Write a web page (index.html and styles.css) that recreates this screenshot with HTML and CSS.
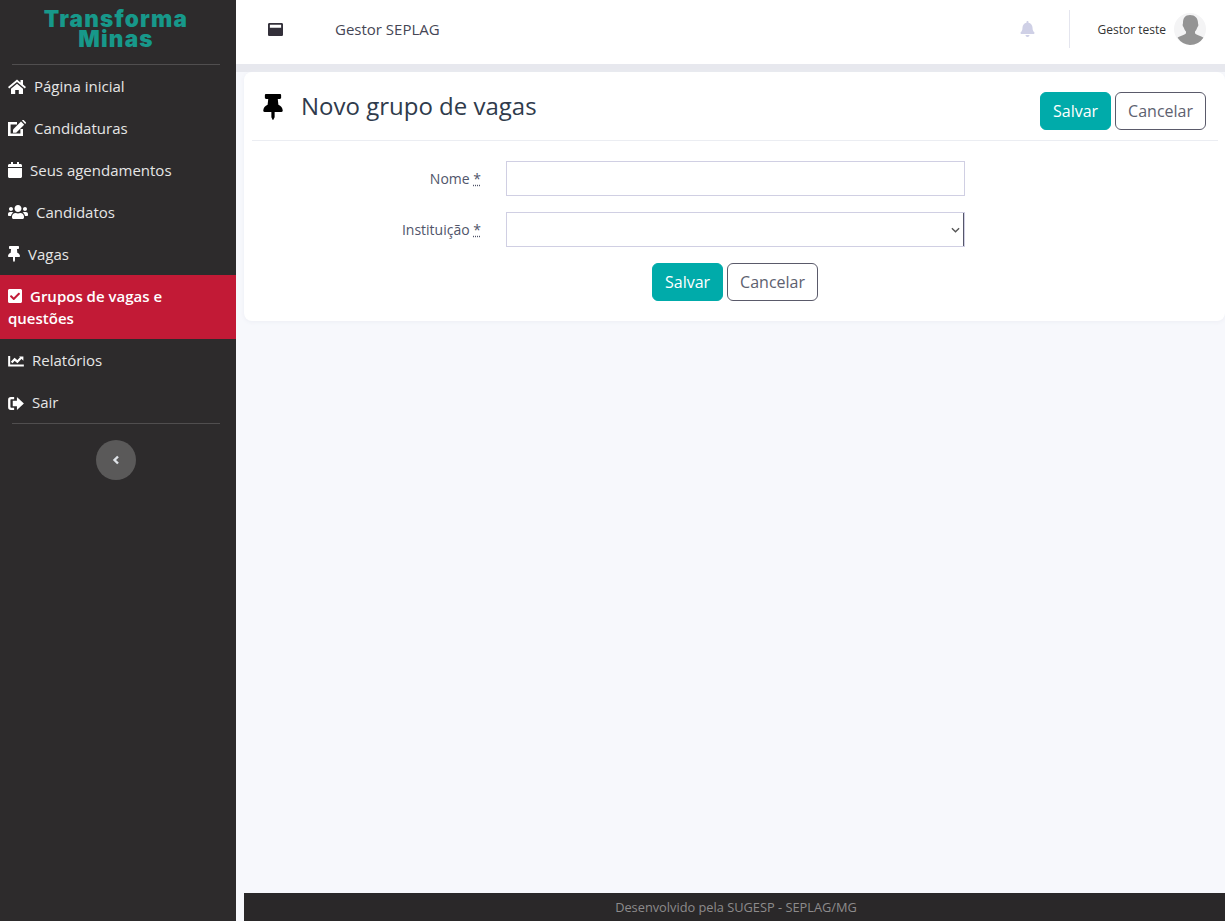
FILE: index.html
```html
<!DOCTYPE html>
<html lang="pt-BR">
<head>
<meta charset="utf-8">
<title>Novo grupo de vagas</title>
<link rel="stylesheet" href="styles.css">
</head>
<body>
<aside class="sidebar">
  <div class="logo">Transforma<br>Minas</div>
  <nav class="menu">
    <a class="item"><svg class="ic ic-home" viewBox="0 0 18 15"><path d="M9 .5 0 8l1.200 1.400L9 3l7.800 6.400L18 8l-3-2.500V1h-2.500v2.400z"/><path d="M3 9.800V15h4.200v-4h3.600v4H15V9.800L9 4.800z"/></svg><span class="t-home">Página inicial</span></a>
    <a class="item"><svg class="ic ic-edit" viewBox="0 0 18 16"><path d="M9 3.300H1.300v11.400h12.400V9" fill="none" stroke="#fff" stroke-width="2.600"/><path d="M5 9.500 13 1.500l3.200 3.200-8 8H5z"/><path d="M14 .6l.6-.5a.8.8 0 0 1 1 0L17.800 2.300a.8.8 0 0 1 0 1l-.6.6z"/></svg><span class="t-edit">Candidaturas</span></a>
    <a class="item"><svg class="ic ic-cal" viewBox="0 0 448 512"><path d="M12 192h424c6.600 0 12 5.400 12 12v260c0 26.500-21.500 48-48 48H48c-26.500 0-48-21.500-48-48V204c0-6.600 5.400-12 12-12zm436-44v-36c0-26.500-21.500-48-48-48h-48V12c0-6.600-5.400-12-12-12h-40c-6.600 0-12 5.400-12 12v52H160V12c0-6.600-5.400-12-12-12h-40c-6.600 0-12 5.400-12 12v52H48C21.500 64 0 85.500 0 112v36c0 6.600 5.400 12 12 12h424c6.600 0 12-5.400 12-12z"/></svg><span class="t-cal">Seus agendamentos</span></a>
    <a class="item"><svg class="ic ic-users" viewBox="0 0 640 512"><path d="M96 224c35.300 0 64-28.700 64-64s-28.700-64-64-64-64 28.700-64 64 28.700 64 64 64zm448 0c35.300 0 64-28.700 64-64s-28.700-64-64-64-64 28.700-64 64 28.700 64 64 64zm32 32h-64c-17.600 0-33.500 7.100-45.100 18.600 40.300 22.100 68.900 62 75.100 109.400h66c17.700 0 32-14.300 32-32v-32c0-35.300-28.700-64-64-64zm-256 0c61.900 0 112-50.100 112-112S381.900 32 320 32 208 82.100 208 144s50.100 112 112 112zm76.800 32h-8.300c-20.800 10-43.900 16-68.500 16s-47.600-6-68.500-16h-8.300C179.600 288 128 339.600 128 403.200V432c0 26.500 21.500 48 48 48h288c26.500 0 48-21.500 48-48v-28.800c0-63.600-51.600-115.200-115.200-115.200zm-223.700-13.400C161.500 263.100 145.600 256 128 256H64c-35.300 0-64 28.700-64 64v32c0 17.700 14.300 32 32 32h65.900c6.300-47.400 34.900-87.300 75.200-109.400z"/></svg><span class="t-users">Candidatos</span></a>
    <a class="item"><svg class="ic ic-pin" viewBox="0 0 384 512"><path d="M298 214 286 96h42c13 0 24-11 24-24V24c0-13-11-24-24-24H56C43 0 32 11 32 24v48c0 13 11 24 24 24h42L86 214C37 237 0 277 0 328c0 13 11 24 24 24h136v104l24 52c3 6 11 6 14 0l26-52V352h136c13 0 24-11 24-24 0-51-38-91-86-114z"/></svg><span class="t-pin">Vagas</span></a>
    <a class="item active"><svg class="ic ic-check" viewBox="0 0 448 512"><path d="M400 480H48c-26.510 0-48-21.490-48-48V80c0-26.510 21.490-48 48-48h352c26.510 0 48 21.490 48 48v352c0 26.510-21.490 48-48 48zm-204.686-98.059 184-184c6.248-6.248 6.248-16.379 0-22.627l-22.627-22.627c-6.248-6.248-16.379-6.249-22.628 0L184 302.745l-70.059-70.059c-6.248-6.248-16.379-6.248-22.628 0L68.686 255.314c-6.248 6.248-6.248 16.379 0 22.627l104 104c6.249 6.250 16.379 6.250 22.628.001z"/></svg><span class="t-check">Grupos de vagas e questões</span></a>
    <a class="item"><svg class="ic ic-chart" viewBox="0 0 17 13"><path d="M1.100 1v10.400H17" fill="none" stroke="#fff" stroke-width="2.200"/><path d="M3.800 8.200 7 4.700l3 2.500 4.200-4.400" fill="none" stroke="#fff" stroke-width="2.400"/><path d="M11.800 1.500H16.500V6.200z"/></svg><span class="t-chart">Relatórios</span></a>
    <a class="item"><svg class="ic ic-out" viewBox="0 0 17 14"><path d="M6.500 0v2.500H3.300a.8.8 0 0 0-.8.8v7.400a.8.8 0 0 0 .8.8h3.200V14H3a3 3 0 0 1-3-3V3a3 3 0 0 1 3-3z"/><path d="M9.500 0 17 7l-7.500 7v-4H5V4h4.500z"/></svg><span class="t-out">Sair</span></a>
  </nav>
  <button class="collapse" type="button" aria-label="Recolher"><svg viewBox="0 0 8 10"><path d="M6 1.500 2.500 5 6 8.500"/></svg></button>
</aside>

<div class="main">
  <header class="topbar">
    <svg class="toggle" viewBox="0 0 512 512"><path d="M464 32H48C21.500 32 0 53.500 0 80v352c0 26.500 21.500 48 48 48h416c26.500 0 48-21.500 48-48V80c0-26.500-21.500-48-48-48zm-16 160H64v-84c0-6.600 5.400-12 12-12h360c6.600 0 12 5.400 12 12v84z"/></svg>
    <span class="org">Gestor SEPLAG</span>
    <svg class="bell" viewBox="0 0 448 512"><path d="M224 512c35.320 0 63.970-28.650 63.970-64H160.030c0 35.350 28.650 64 63.970 64zm215.390-149.710c-19.320-20.760-55.470-51.990-55.470-154.290 0-77.700-54.480-139.900-127.940-155.160V32c0-17.670-14.320-32-31.980-32s-31.980 14.330-31.980 32v20.840C118.560 68.100 64.080 130.300 64.080 208c0 102.300-36.150 133.530-55.470 154.290-6 6.450-8.660 14.160-8.610 21.710.11 16.400 12.980 32 32.100 32h383.800c19.120 0 32-15.600 32.100-32 .05-7.550-2.610-15.270-8.610-21.710z"/></svg>
    <span class="divider"></span>
    <span class="user">Gestor teste</span>
    <svg class="avatar" viewBox="0 0 32 32"><circle cx="16" cy="16" r="16" fill="#f4f4f5"/><path fill="#949494" d="M16 2c5 0 8 3.200 8 7.800 0 1.300.5 1.500.3 2.800-.2 1-.7 1.300-1 2-.5 1.500-1.300 3-2.300 4v1.600c1.500 1.800 6 2.500 8.400 4.600A16 16 0 0 1 16 32a16 16 0 0 1-12.400-7.200c2.400-2.100 6.900-2.800 8.400-4.600v-1.600c-1-1-1.800-2.500-2.300-4-.3-.7-.8-1-1-2-.2-1.300.3-1.500.3-2.800C9 5.200 11 2 16 2z"/></svg>
  </header>

  <div class="content">
    <section class="card">
      <div class="card-head">
        <svg class="head-pin" viewBox="0 0 384 512"><path d="M298 214 286 96h42c13 0 24-11 24-24V24c0-13-11-24-24-24H56C43 0 32 11 32 24v48c0 13 11 24 24 24h42L86 214C37 237 0 277 0 328c0 13 11 24 24 24h136v104l24 52c3 6 11 6 14 0l26-52V352h136c13 0 24-11 24-24 0-51-38-91-86-114z"/></svg>
        <h1 class="title">Novo grupo de vagas</h1>
        <div class="btns head-btns">
          <button class="btn primary" type="button">Salvar</button>
          <button class="btn ghost" type="button">Cancelar</button>
        </div>
      </div>
      <form class="form">
        <div class="row">
          <label class="lbl" for="nome">Nome <abbr class="req" title="obrigatório">*</abbr></label>
          <input class="field" id="nome" type="text">
        </div>
        <div class="row">
          <label class="lbl" for="inst">Instituição <abbr class="req" title="obrigatório">*</abbr></label>
          <select class="field select" id="inst"><option></option></select>
        </div>
        <div class="btns form-btns">
          <button class="btn primary" type="button">Salvar</button>
          <button class="btn ghost" type="button">Cancelar</button>
        </div>
      </form>
    </section>
  </div>

  <footer class="footer">Desenvolvido pela SUGESP - SEPLAG/MG</footer>
</div>
</body>
</html>
```
FILE: styles.css
```css
* { box-sizing: border-box; }
html, body { height: 100%; }
body {
  margin: 0;
  display: flex;
  height: 100vh;
  overflow: hidden;
  font-family: "Open Sans", "Noto Sans", sans-serif;
  font-size: 14px;
  color: #3f4254;
  background: #f7f8fc;
}

/* Sidebar */
.sidebar {
  width: 236px;
  flex: none;
  background: #2d2b2c;
  display: flex;
  flex-direction: column;
  position: relative;
  z-index: 1;
}
.logo {
  height: 65px;
  margin: 0 16px 0 12px;
  padding-top: 9px;
  border-bottom: 1px solid #504e4f;
  text-align: center;
  font-family: Inter, "Open Sans", sans-serif;
  font-weight: 900;
  font-size: 22.5px;
  line-height: 20px;
  letter-spacing: 1.2px;
  color: #17988a;
}
.menu {
  margin-bottom: 16px;
}
.menu::after {
  content: "";
  display: block;
  height: 1px;
  margin: 0 16px 0 12px;
  background: #504e4f;
}
.item {
  display: block;
  padding: 10px 8px;
  font-size: 15px;
  line-height: 22px;
  color: #e6e6e6;
}
.item.active {
  background: #c21a36;
  color: #fff;
  font-weight: 600;
}
.ic {
  fill: #fff;
  vertical-align: -2px;
  height: 15px;
}
.ic-home { width: 18px; margin-right: 8px; }
.ic-edit { width: 18px; height: 16px; margin-right: 8px; }
.ic-cal { width: 14px; height: 16px; margin-right: 8px; }
.ic-users { width: 20px; height: 16px; margin-right: 8px; }
.ic-pin { width: 12px; height: 16px; margin-right: 8px; }
.ic-check { width: 14px; height: 16px; margin-right: 8px; }
.ic-chart { width: 16px; height: 12px; margin-right: 8px; vertical-align: -1px; }
.ic-out { width: 16px; height: 13px; margin-right: 8px; }

.collapse {
  align-self: flex-start;
  margin-left: 96px;
  width: 40px;
  height: 40px;
  padding: 0;
  border: 0;
  border-radius: 50%;
  background: #5a5959;
  display: flex;
  align-items: center;
  justify-content: center;
}
.collapse svg {
  width: 8px;
  height: 10px;
  fill: none;
  stroke: #dfe3e8;
  stroke-width: 2.400;
}

/* Main */
.main {
  flex: 1;
  min-width: 0;
  display: flex;
  flex-direction: column;
}
.topbar {
  height: 64px;
  flex: none;
  background: #fff;
  display: flex;
  align-items: center;
  padding: 0 19px 6px 0;
  box-shadow: 0 8px 0 #e7e8ee;
}
.toggle { width: 15px; height: 15px; margin-left: 32px; margin-top: 1px; fill: #33303a; flex: none; }
.org { margin-left: 52px; font-size: 15px; color: #454655; }
.bell { width: 15px; height: 16px; margin-left: auto; fill: #cfd0e6; flex: none; }
.divider { width: 1px; height: 38px; margin-left: 34px; background: #e4e5ee; flex: none; }
.user { margin-left: 28px; font-size: 12px; color: #333; }
.avatar { width: 32px; height: 32px; margin-left: 8px; flex: none; }

.content {
  flex: 1;
  padding: 8px 0 0 8px;
}
.card {
  height: 249px;
  background: #fff;
  border-radius: 8px;
  box-shadow: 0 1px 4px #eceef4;
}
.card-head {
  height: 69px;
  margin: 0 7px 0 8px;
  border-bottom: 1px solid #ebedf2;
  display: flex;
  align-items: flex-start;
}
.head-pin { width: 20px; height: 26px; margin: 22px 0 0 11px; flex: none; fill: #000; }
.title {
  margin: 16px 0 0 18px;
  font-size: 24px;
  line-height: 36px;
  font-weight: 400;
  color: #2f3b4c;
}
.btns { display: flex; gap: 4px; }
.head-btns { margin: 20px 12px 0 auto; }
.btn {
  height: 38px;
  padding: 0 12px;
  border-radius: 6px;
  font-family: inherit;
  font-size: 16px;
  line-height: 24px;
}
.primary { background: #00abaa; border: 1px solid #00abaa; color: #fff; }
.ghost { background: #fff; border: 1px solid #5a5a6a; color: #5d6170; }

.form { padding-top: 20px; }
.row {
  display: flex;
  align-items: center;
  gap: 25px;
  margin-bottom: 16px;
}
.lbl {
  width: 237px;
  text-align: right;
  color: #50556a;
}
.req { text-decoration: underline dotted; color: #50556a; }
.field {
  width: 459px;
  height: 35px;
  padding: 0 10px;
  border: 1px solid #d0cfe3;
  border-radius: 0;
  background: #fff;
  font-family: inherit;
  font-size: 14px;
  outline: 0;
}
.select {
  appearance: none;
  box-shadow: inset -1px 0 0 #55566a;
  background-image: url("data:image/svg+xml,%3Csvg xmlns='http://www.w3.org/2000/svg' viewBox='0 0 10 6'%3E%3Cpath d='M1 1l4 4 4-4' fill='none' stroke='%23555' stroke-width='1.500'/%3E%3C/svg%3E");
  background-repeat: no-repeat;
  background-size: 9px 6px;
  background-position: right 4px center;
}
.form-btns {
  margin-left: 262px;
  width: 458px;
  justify-content: center;
}
.footer {
  height: 28px;
  flex: none;
  margin-left: 8px;
  padding-left: 3px;
  background: #2a2829;
  color: #8d8b8c;
  font-size: 12.8px;
  line-height: 28px;
  text-align: center;
}
```
